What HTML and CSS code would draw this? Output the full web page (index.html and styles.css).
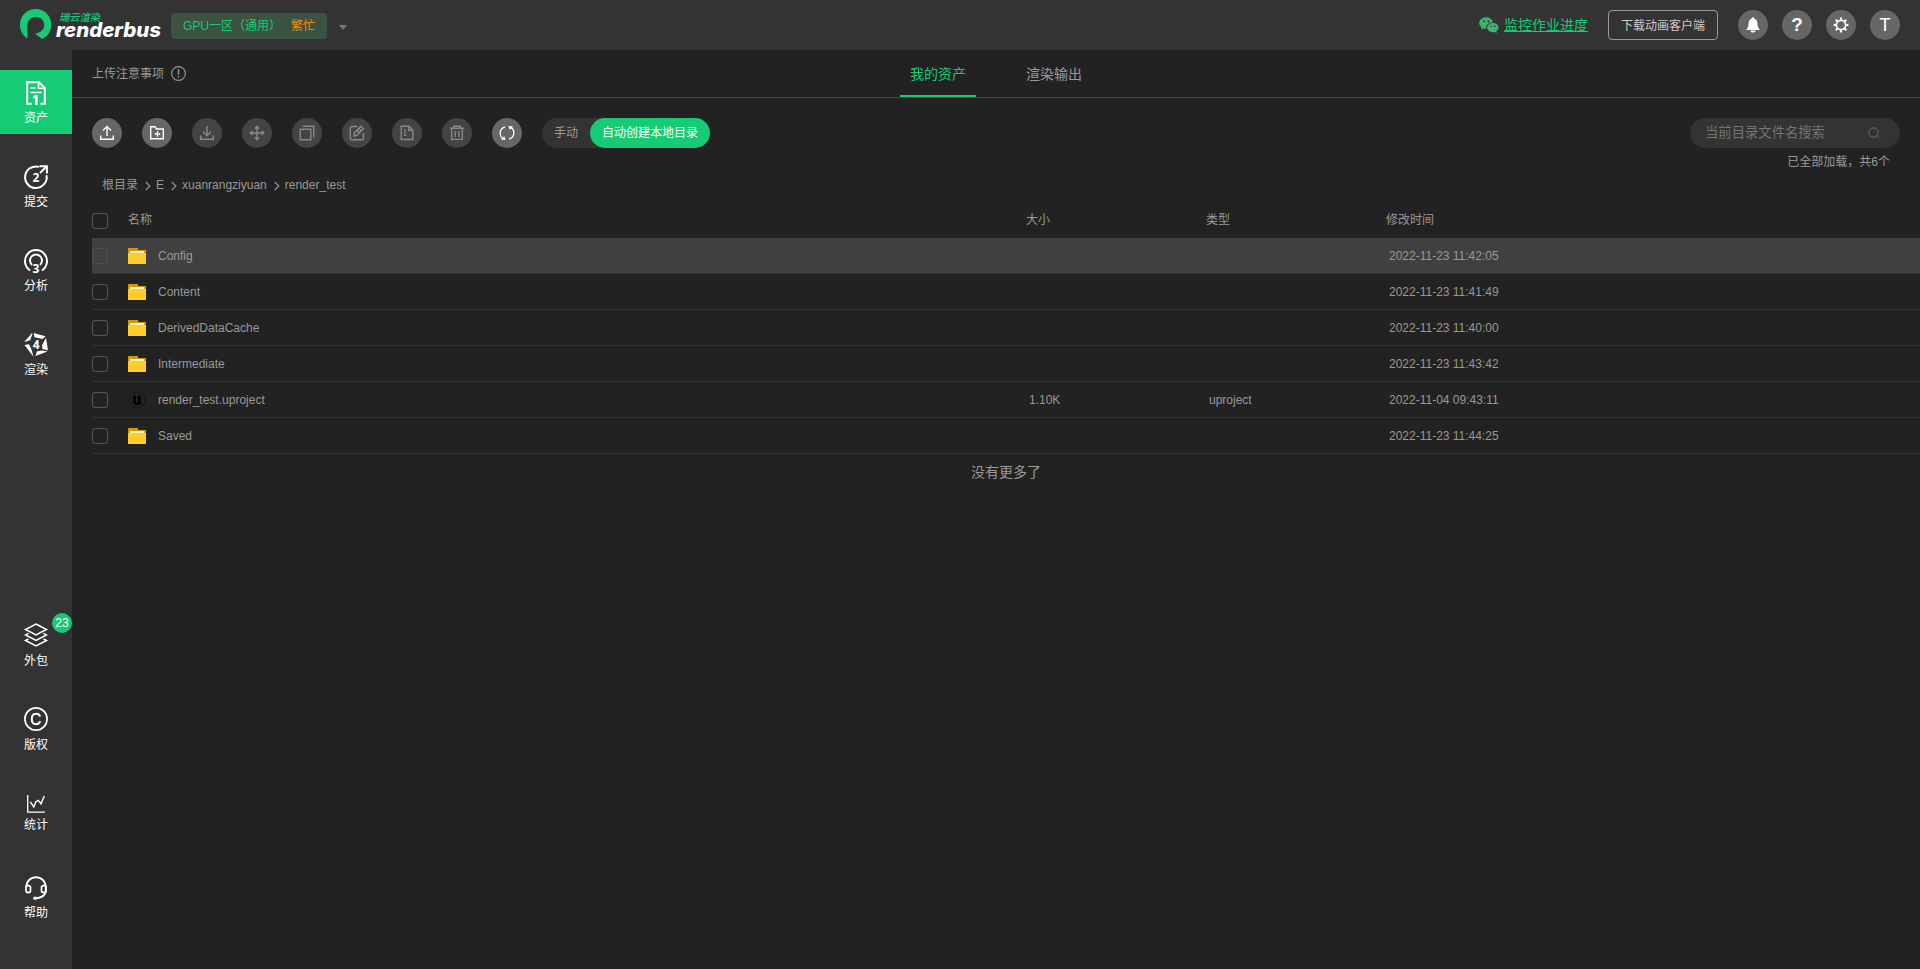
FILE: index.html
```html
<!DOCTYPE html>
<html lang="zh-CN">
<head>
<meta charset="utf-8">
<title>Renderbus</title>
<link rel="stylesheet" href="styles.css">
</head>
<body>
<header class="header">
  <div class="logo">
    <svg class="logo-mark" width="32" height="31" viewBox="0 0 32 31"><path fill="#15cb75" d="M7.500 29.500C2.800 26.800 0 21.500 0 15.700C0 6.500 7 0 15.600 0C24.500 0 31.300 6.700 31.300 15.500C31.300 22.400 27.800 27.600 22 30L15 24.500C20.500 23.800 24.200 20.500 24.200 15.900C24.200 11.500 20.500 8.100 15.800 8.100C11 8.100 7.400 11.600 7.400 16.600Z"/></svg>
    <svg class="logo-text" width="110" height="32" viewBox="0 0 110 32"><text class="logo-cn" x="4" y="11.500" textLength="41" lengthAdjust="spacingAndGlyphs">瑞云渲染</text><text class="logo-en" x="1" y="28" textLength="105" lengthAdjust="spacingAndGlyphs">renderbus</text></svg>
  </div>
  <div class="region"><span>GPU一区（通用）</span><span class="busy">繁忙</span></div>
  <i class="caret"></i>
  <div class="header-right">
    <svg class="wechat" width="20" height="16" viewBox="0 0 20 16"><path fill="#3eb370" d="M7.200 0.200C3.300 0.200 0.200 2.800 0.200 6.100C0.200 7.900 1.200 9.500 2.700 10.600L2 12.700L4.500 11.400C5.400 11.700 6.300 11.900 7.400 11.800C6.500 8.300 9.700 5 14 5.200C13.400 2.300 10.500 0.200 7.200 0.200Z"/><path fill="#3eb370" d="M13.900 5.900C10.700 5.900 8.200 8 8.200 10.600S10.700 15.300 13.900 15.300C14.600 15.300 15.300 15.200 15.900 15L17.900 16L17.300 14.200C18.700 13.300 19.600 12.100 19.600 10.600C19.600 8 17.100 5.900 13.900 5.900Z"/><g fill="#333"><circle cx="4.900" cy="4.300" r="0.950"/><circle cx="9.500" cy="4.300" r="0.950"/><circle cx="12" cy="9.200" r="0.800"/><circle cx="15.800" cy="9.200" r="0.800"/></g></svg>
    <a class="monitor">监控作业进度</a>
    <div class="download">下载动画客户端</div>
    <div class="circles">
      <span class="circle"><svg width="14" height="16" viewBox="0 0 14 16"><path fill="#fff" d="M7 0.300C7.800 0.300 8.300 0.900 8.300 1.600C10.300 2.300 11.300 4 11.400 6C11.500 9 12 10.500 13.500 12.300V13H0.500V12.300C2 10.500 2.500 9 2.600 6C2.700 4 3.700 2.300 5.700 1.600C5.700 0.900 6.200 0.300 7 0.300ZM4.300 13.500H9.700C9.500 14.800 8.500 15.600 7 15.600S4.500 14.800 4.300 13.500Z"/></svg></span>
      <span class="circle help-mark">?</span>
      <span class="circle"><svg width="16" height="16" viewBox="0 0 16 16"><circle cx="8" cy="8" r="4.600" fill="none" stroke="#fff" stroke-width="1.700"/><path d="M6.800 0.600H9.200L8.800 3.600H7.200ZM6.800 15.400H9.200L8.800 12.400H7.200ZM0.600 6.800V9.200L3.600 8.800V7.200ZM15.400 6.800V9.200L12.400 8.800V7.200ZM2 3.600L3.600 2L5.500 4.300L4.300 5.500ZM14 3.600L12.400 2L10.500 4.300L11.700 5.500ZM2 12.400L3.600 14L5.500 11.700L4.300 10.500ZM14 12.400L12.400 14L10.500 11.700L11.700 10.500Z" fill="#fff"/></svg></span>
      <span class="circle avatar">T</span>
    </div>
  </div>
</header>
<div class="body">
  <nav class="side">
    <a class="item active"><svg width="24" height="24" viewBox="0 0 24 24"><path fill="none" stroke="#fff" stroke-width="2" d="M8 22.700H3.200V1.200H15L20.800 7V22.700H16.500"/><path fill="none" stroke="#fff" stroke-width="1.600" d="M14.500 1.500V7.300H20.500M6.500 7H11.500M6.500 11.500H17.500"/><path fill="#fff" d="M9 17.500V15.600L11.300 14H13.600V24H11.200V16.800Z"/></svg><span>资产</span></a>
    <a class="item"><svg width="24" height="24" viewBox="0 0 24 24"><path fill="none" stroke="#fff" stroke-width="2" d="M15 1.900A10.800 10.800 0 1 0 22.500 10.200M16 8L22.500 1.500M15.500 1.200H22.900V8.500"/><text class="num" x="12" y="16.500">2</text></svg><span>提交</span></a>
    <a class="item"><svg width="24" height="24" viewBox="0 0 24 24"><path fill="none" stroke="#fff" stroke-width="2" d="M6 21.300A11 11 0 1 1 18 21.300M8 16A6 6 0 1 1 16 16"/><text class="num" x="12" y="23.600">3</text></svg><span>分析</span></a>
    <a class="item"><svg width="24" height="24" viewBox="0 0 24 24"><g fill="#fff"><path d="M0.200 9L7.800 0.200L8.500 1L6.200 7.200Z"/><path d="M9.500 0L21.500 3.300L18.500 6L10.500 4.200Z"/><path d="M22 4.800L24 17.300L18.500 16L18 12.500Z"/><path d="M23.500 18.600L11.500 23L13 18.200L18.500 17.500Z"/><path d="M0.500 12L5 11.200L7.500 16.500L9.500 23.800Z"/></g><text class="num" x="12.300" y="16">4</text></svg><span>渲染</span></a>
    <div class="spacer"></div>
    <a class="item outsource"><svg width="24" height="24" viewBox="0 0 24 24"><g fill="none" stroke="#fff" stroke-width="1.500"><path d="M12 1L22.500 6.500L12 12L1.500 6.500Z"/><path d="M4.500 10.300L1.500 12L12 17.500L22.500 12L19.500 10.300"/><path d="M4.500 15.800L1.500 17.500L12 23L22.500 17.500L19.500 15.800"/></g></svg><span>外包</span><b class="badge">23</b></a>
    <a class="item outsource"><svg width="24" height="24" viewBox="0 0 24 24"><circle cx="12" cy="12" r="11.100" fill="none" stroke="#fff" stroke-width="1.700"/><path fill="none" stroke="#fff" stroke-width="2" d="M16 9.700C15.700 7.800 14.400 6.800 12.200 6.800C9.500 6.800 7.800 8.700 7.800 12S9.500 17.200 12.200 17.200C14.400 17.200 15.700 16.200 16 14.200"/></svg><span>版权</span></a>
    <a class="item stats"><svg width="18" height="18" viewBox="0 0 18 18"><path fill="none" stroke="#fff" stroke-width="1.300" d="M0.700 0V17.200H18"/><path fill="none" stroke="#fff" stroke-width="1.400" d="M3.300 6.800L6.800 12L8.800 6.800L11.300 5.300L14 8.800L17.300 1"/></svg><span>统计</span></a>
    <a class="item support"><svg width="24" height="24" viewBox="0 0 24 24"><path fill="none" stroke="#fff" stroke-width="2" d="M2.200 11V10.500C2.600 4.800 6.800 1.200 12 1.200S21.400 4.800 21.800 10.500V15C21.300 19.800 16.500 22.200 11.500 22.200"/><rect x="2" y="9.600" width="4.500" height="7" rx="2" fill="none" stroke="#fff" stroke-width="1.700"/><rect x="17.500" y="9.600" width="4.500" height="7" rx="2" fill="none" stroke="#fff" stroke-width="1.700"/><circle cx="11" cy="22.200" r="1.800" fill="#fff"/></svg><span>帮助</span></a>
  </nav>
  <main class="main">
    <div class="topbar">
      <div class="notice"><span>上传注意事项</span><svg width="15" height="15" viewBox="0 0 15 15"><circle cx="7.500" cy="7.500" r="6.900" fill="none" stroke="#999" stroke-width="1.100"/><path stroke="#999" stroke-width="1.400" d="M7.500 3.200V8.800M7.500 10.100V11.600"/></svg></div>
      <div class="tab on">我的资产</div>
      <div class="tab">渲染输出</div>
    </div>
    <div class="tools">
      <span class="tool lit"><svg viewBox="0 0 16 16"><path d="M8 11V1.700M4 5.500L8 1.500L12 5.500M1.700 10.500V14.300H14.300V10.500"/></svg></span>
      <span class="tool lit"><svg viewBox="0 0 16 16"><path d="M1.700 1.700H6L7.500 4H14.300V13.700H1.700ZM8.500 6.300V11.700M5.800 9H11.200"/></svg></span>
      <span class="tool"><svg viewBox="0 0 16 16"><path d="M8 1V10.700M4 6.800L8 10.800L12 6.800M1.700 10.500V14.300H14.300V10.500"/></svg></span>
      <span class="tool"><svg viewBox="0 0 16 16"><path d="M8 1.300V14.700M1.300 8H14.700M5.900 3.400L8 1.300L10.100 3.400M5.900 12.600L8 14.700L10.100 12.600M3.400 5.900L1.300 8L3.400 10.100M12.600 5.900L14.700 8L12.600 10.100"/></svg></span>
      <span class="tool"><svg viewBox="0 0 16 16"><path d="M1.200 4.200H11.800V14.800H1.200ZM3.700 1.200H14.800V12.500"/></svg></span>
      <span class="tool"><svg viewBox="0 0 16 16"><path d="M8.500 1.500H3Q1.200 1.500 1.200 3.300V13Q1.200 14.800 3 14.800H12.700Q14.500 14.800 14.500 13V8M5 11L5.500 7.700L12 1.200L14.500 3.700L8 10.300ZM10 3.500L12.300 5.800M8 5.500L10.300 7.800"/></svg></span>
      <span class="tool"><svg viewBox="0 0 16 16"><path d="M2.200 1.300H10L13.800 5V14.500H2.200ZM9.700 1.500V5.300H13.500"/><path stroke-dasharray="1.500 1" stroke-width="2.400" d="M6 4.500V12"/></svg></span>
      <span class="tool"><svg viewBox="0 0 16 16"><path d="M1 3.300H15M4.800 3V1.200H11.200V3M2.700 3.500V14.400H13.300V3.500M6.200 6V12M9.800 6V12"/></svg></span>
      <span class="tool lit"><svg viewBox="0 0 16 16"><path stroke-width="1.300" d="M6 1.800C-0.300 4 -0.300 11.500 5 14.200M10 14.200C16.300 12 16.300 4.500 11 1.800"/><path stroke="none" fill="#fff" d="M1.800 14.500L6.600 14.900L5.300 11.200ZM14.200 1.500L9.400 1.100L10.700 4.800Z"/></svg></span>
      <div class="toggle"><span class="manual">手动</span><span class="auto">自动创建本地目录</span></div>
      <div class="search"><span>当前目录文件名搜索</span><svg width="12" height="12" viewBox="0 0 12 12"><circle cx="5.500" cy="5.500" r="4.700" fill="none" stroke="#6c6c6c"/><path d="M8.300 8.300L10.800 10.800" stroke="#6c6c6c"/></svg></div>
    </div>
    <div class="loaded">已全部加载，共6个</div>
    <div class="crumbs">
      <span>根目录</span><svg class="sep" viewBox="0 0 6 10"><path d="M0.700 1L4.900 5L0.700 9"/></svg><span>E</span><svg class="sep" viewBox="0 0 6 10"><path d="M0.700 1L4.900 5L0.700 9"/></svg><span>xuanrangziyuan</span><svg class="sep" viewBox="0 0 6 10"><path d="M0.700 1L4.900 5L0.700 9"/></svg><span>render_test</span>
    </div>
    <div class="row head"><i class="check"></i><span>名称</span><span>大小</span><span>类型</span><span>修改时间</span></div>
    <div class="rows">
      <div class="row hover"><i class="check"></i><span class="name"><i class="folder"></i>Config</span><span></span><span></span><span>2022-11-23 11:42:05</span></div>
      <div class="row"><i class="check"></i><span class="name"><i class="folder"></i>Content</span><span></span><span></span><span>2022-11-23 11:41:49</span></div>
      <div class="row"><i class="check"></i><span class="name"><i class="folder"></i>DerivedDataCache</span><span></span><span></span><span>2022-11-23 11:40:00</span></div>
      <div class="row"><i class="check"></i><span class="name"><i class="folder"></i>Intermediate</span><span></span><span></span><span>2022-11-23 11:43:42</span></div>
      <div class="row"><i class="check"></i><span class="name"><svg class="unreal" width="18" height="18" viewBox="0 0 18 18"><circle cx="9" cy="9" r="8.400" fill="#202020" stroke="#161616"/><path fill="#000" d="M4.200 7C5 5.300 6.300 4.400 8 4L7.700 5.200V11.300C8.200 12 9.300 12 10 11.300V6L9.300 5.400C10.500 5.200 11.700 4.600 12.700 3.800L12.300 5.500V11.200L13.800 10.900C12.900 12.700 11.700 13.700 10.300 14L9.600 13.200L8.400 14C6.800 13.800 5.800 13.100 5.300 12.200V7C5.200 6.600 4.700 6.600 4.200 7Z"/></svg>render_test.uproject</span><span>1.10K</span><span>uproject</span><span>2022-11-04 09:43:11</span></div>
      <div class="row"><i class="check"></i><span class="name"><i class="folder"></i>Saved</span><span></span><span></span><span>2022-11-23 11:44:25</span></div>
    </div>
    <div class="end">没有更多了</div>
  </main>
</div>
</body>
</html>
```
FILE: styles.css
```css
* { box-sizing: border-box; }
body {
  margin: 0;
  height: 969px;
  overflow: hidden;
  display: flex;
  flex-direction: column;
  background: #222;
  color: #999;
  font: 12px/16px "Liberation Sans", "Noto Sans CJK SC", sans-serif;
}
span, a, div { white-space: nowrap; }
svg { display: block; flex: none; overflow: visible; }

.header {
  height: 50px;
  flex: none;
  background: #333;
  display: flex;
  align-items: center;
  padding: 0 20px;
}
.logo { display: flex; width: 151px; }
.logo-mark { margin-right: 3px; }
.logo-cn { font: italic 500 10px "Noto Sans CJK SC", sans-serif; fill: #15cb75; }
.logo-en { font: italic 800 19.5px Inter, sans-serif; fill: #fff; }
.region {
  width: 156px;
  height: 26px;
  margin-top: 2px;
  padding-left: 12px;
  border-radius: 4px;
  background: #3d5342;
  color: #15cb75;
  display: flex;
  align-items: center;
}
.region span:first-child { width: 108px; }
.region .busy { color: #ff8b00; }
.caret {
  margin: 4px 0 0 12px;
  border: 5px solid transparent;
  border-width: 5px 4px 0;
  border-top-color: #777;
}
.header-right { margin-left: auto; display: flex; align-items: center; }
.wechat { margin: -1px 5px 0 0; }
.monitor { color: #15cb75; font-size: 14px; text-decoration: underline; margin-right: 20px; }
.download {
  width: 110px;
  height: 30px;
  border: 1px solid #999;
  border-radius: 4px;
  color: #ccc;
  text-align: center;
  line-height: 30px;
  margin-right: 20px;
}
.circles { display: flex; gap: 14px; }
.circle {
  width: 30px;
  height: 30px;
  border-radius: 50%;
  background: #666;
  color: #fff;
  display: flex;
  align-items: center;
  justify-content: center;
}
.help-mark { font-size: 19px; font-weight: bold; }
.avatar { font-size: 18px; }

.body { flex: 1; display: flex; min-height: 0; }
.side {
  width: 72px;
  flex: none;
  background: #333;
  display: flex;
  flex-direction: column;
  padding: 20px 0 40px;
}
.item {
  position: relative;
  height: 64px;
  margin-bottom: 20px;
  padding-top: 11px;
  display: flex;
  flex-direction: column;
  align-items: center;
  gap: 5px;
  flex: none;
  color: #fff;
}
.item.active { background: #15cb75; }
.num { font: bold 12px "Open Sans", sans-serif; fill: #fff; text-anchor: middle; }
.spacer { flex: 1; }
.item.outsource { gap: 6px; }
.item.stats { padding-top: 15px; gap: 4px; height: 65px; }
.badge {
  position: absolute;
  right: 0;
  top: 1px;
  width: 20px;
  height: 20px;
  border-radius: 50%;
  background: #15cb75;
  font-weight: normal;
  line-height: 20px;
  text-align: center;
}
.item.support { margin-bottom: 0; }

.main { flex: 1; min-width: 0; padding-left: 20px; }
.topbar {
  height: 48px;
  margin-left: -20px;
  padding-left: 20px;
  border-bottom: 1px solid #444;
  display: flex;
}
.notice { width: 808px; display: flex; align-items: center; gap: 7px; padding-bottom: 1px; }
.notice span { padding-top: 1px; }
.tab { width: 76px; margin-right: 40px; text-align: center; font-size: 14px; line-height: 48px; }
.tab.on { color: #15cb75; border-bottom: 2px solid #15cb75; }
.tools { display: flex; gap: 20px; padding: 20px 20px 0 0; }
.tool {
  width: 30px;
  height: 30px;
  border-radius: 50%;
  background: #444;
  display: flex;
  align-items: center;
  justify-content: center;
}
.tool svg { width: 16px; height: 16px; fill: none; stroke: #888; stroke-width: 1.4; }
.tool.lit { background: #666; }
.tool.lit svg { stroke: #fff; }
.toggle { width: 168px; height: 30px; border-radius: 15px; background: #333; display: flex; line-height: 30px; }
.manual { width: 48px; padding-left: 12px; }
.auto { width: 120px; border-radius: 15px; background: #15cb75; color: #fff; text-align: center; }
.search {
  width: 210px;
  height: 30px;
  margin-left: auto;
  border-radius: 15px;
  background: #333;
  color: #757575;
  font-size: 13.333px;
  display: flex;
  align-items: center;
  justify-content: space-between;
  padding: 0 20px 0 15px;
}
.loaded { text-align: right; padding-right: 30px; margin-top: 6px; }
.crumbs { display: flex; align-items: center; height: 16px; margin-top: 7px; padding-left: 10px; }
.sep { width: 6px; height: 10px; margin: 2px 5px 0 7px; fill: none; stroke: #999; stroke-width: 1.1; }

.row {
  height: 36px;
  display: grid;
  grid-template-columns: 36px 901px 180px 180px 1fr;
  align-items: center;
  border-bottom: 1px solid #333;
}
.row.head { height: 45px; padding-top: 10px; grid-template-columns: 36px 898px 180px 180px 1fr; border-bottom: 0; }
.row.hover { background: #404040; }
.row.hover .check { border-color: #4e4e4e; }
.check { width: 16px; height: 16px; border: 1px solid #555; border-radius: 3px; }
.row.head span { margin-top: -2px; }
.name { display: flex; align-items: center; }
.folder {
  width: 18px;
  height: 16px;
  margin-right: 12px;
  background:
    linear-gradient(#fff1c4, #fff1c4) 2px 3px / 14px 2px no-repeat,
    linear-gradient(#ffcb2d, #ffcb2d) 0 5px / 18px 11px no-repeat,
    linear-gradient(#d19b00, #d19b00) 0 2px / 18px 3px no-repeat,
    linear-gradient(#d19b00, #d19b00) 0 0 / 10px 2px no-repeat;
}
.unreal { margin-right: 12px; }
.end { text-align: center; font-size: 14px; line-height: 36px; }
```
